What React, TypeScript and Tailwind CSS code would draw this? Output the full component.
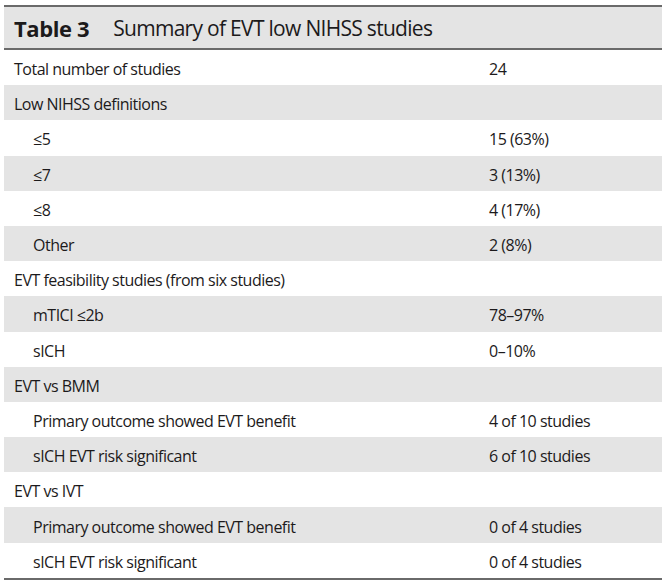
const rows: { label: string; value: string; indent?: boolean }[] = [
  { label: 'Total number of studies', value: '24' },
  { label: 'Low NIHSS definitions', value: '' },
  { label: '≤5', value: '15 (63%)', indent: true },
  { label: '≤7', value: '3 (13%)', indent: true },
  { label: '≤8', value: '4 (17%)', indent: true },
  { label: 'Other', value: '2 (8%)', indent: true },
  { label: 'EVT feasibility studies (from six studies)', value: '' },
  { label: 'mTICI ≤2b', value: '78–97%', indent: true },
  { label: 'sICH', value: '0–10%', indent: true },
  { label: 'EVT vs BMM', value: '' },
  { label: 'Primary outcome showed EVT benefit', value: '4 of 10 studies', indent: true },
  { label: 'sICH EVT risk significant', value: '6 of 10 studies', indent: true },
  { label: 'EVT vs IVT', value: '' },
  { label: 'Primary outcome showed EVT benefit', value: '0 of 4 studies', indent: true },
  { label: 'sICH EVT risk significant', value: '0 of 4 studies', indent: true },
]

export default function App() {
  return (
    <div className="min-h-[584px] bg-white pt-[5px] pl-[4px] text-[#1c1a1b]" style={{ fontFamily: '"Open Sans", "Noto Sans", sans-serif' }}>
      <div className="w-[658px] border-t-2 border-b-2 border-[#6a6a6a]">
        <div className="flex h-[43px] items-center gap-[24px] border-b-2 border-[#6a6a6a] bg-[#e4e4e4] px-[10px] pt-[2px]">
          <span className="text-[22px] font-bold tracking-[-0.4px]">Table 3</span>
          <span className="text-[21px] tracking-[-0.7px]">Summary of EVT low NIHSS studies</span>
        </div>
        {rows.map((r, i) => (
          <div
            key={i}
            className={`grid h-[35.2px] grid-cols-[485px_1fr] items-center pt-[3px] text-[16px] tracking-[-0.5px] ${i % 2 === 1 ? 'bg-[#e4e4e4]' : 'bg-white'}`}
          >
            <span className={r.indent ? 'pl-[29px]' : 'pl-[10px]'}>{r.label}</span>
            <span>{r.value}</span>
          </div>
        ))}
      </div>
    </div>
  )
}
